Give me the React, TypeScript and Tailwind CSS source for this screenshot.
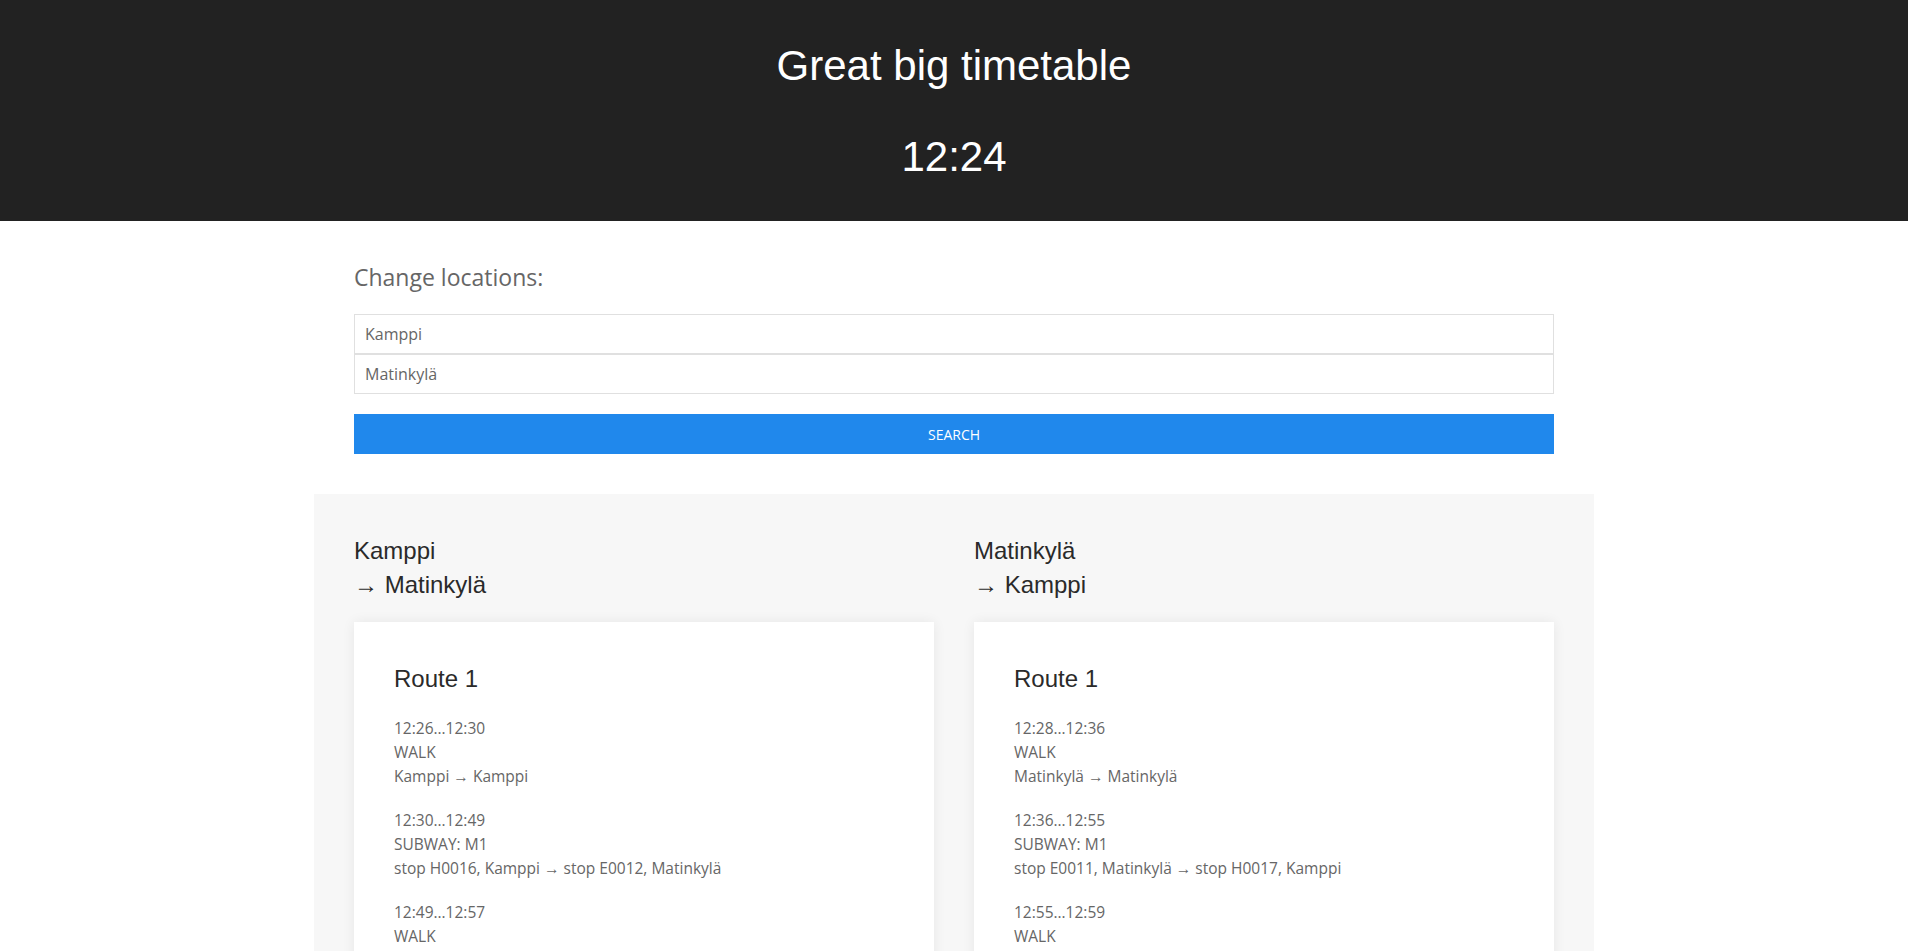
const trips = [
  {
    from: 'Kamppi',
    to: 'Matinkylä',
    routes: [
      {
        name: 'Route 1',
        legs: [
          { time: '12:26…12:30', mode: 'WALK', path: 'Kamppi → Kamppi' },
          { time: '12:30…12:49', mode: 'SUBWAY: M1', path: 'stop H0016, Kamppi → stop E0012, Matinkylä' },
          { time: '12:49…12:57', mode: 'WALK', path: 'stop E0012, Matinkylä → Matinkylä' },
        ],
      },
    ],
  },
  {
    from: 'Matinkylä',
    to: 'Kamppi',
    routes: [
      {
        name: 'Route 1',
        legs: [
          { time: '12:28…12:36', mode: 'WALK', path: 'Matinkylä → Matinkylä' },
          { time: '12:36…12:55', mode: 'SUBWAY: M1', path: 'stop E0011, Matinkylä → stop H0017, Kamppi' },
          { time: '12:55…12:59', mode: 'WALK', path: 'stop H0017, Kamppi → Kamppi' },
        ],
      },
    ],
  },
]

export default function App() {
  return (
    <div className="min-h-screen bg-white font-['Open_Sans',sans-serif]">
      {/* header */}
      <header className="bg-[#222222] pt-[42px] pb-[40px] text-center text-white font-['Liberation_Sans',Arial,sans-serif]">
        <h1 className="text-[42px] leading-[48px] mb-[43px]">Great big timetable</h1>
        <div className="text-[42px] leading-[48px]">12:24</div>
      </header>

      {/* search form */}
      <section className="w-[1200px] mx-auto pt-10">
        <h2 className="text-[23px] leading-8 text-[#666666] mb-[21px]">Change locations:</h2>
        <div className="flex flex-col">
          <input
            defaultValue="Kamppi"
            className="h-10 border border-[#e0e0e0] px-[10px] text-[16px] text-[#666666] outline-none"
          />
          <input
            defaultValue="Matinkylä"
            className="h-10 border border-[#e0e0e0] px-[10px] text-[16px] text-[#666666] outline-none"
          />
        </div>
        <button className="mt-5 w-full h-10 bg-[#2088ec] text-white text-[14px] uppercase">
          Search
        </button>
      </section>

      {/* results */}
      <section className="w-[1280px] mx-auto mt-10 bg-[#f7f7f7] px-10 pt-10 pb-10">
        <div className="grid grid-cols-2 gap-10">
          {trips.map((t) => (
            <div key={t.from}>
              <h3 className="font-['Liberation_Sans',Arial,sans-serif] text-[24px] leading-[34px] text-[#2a2a2a] mb-5">
                {t.from}
                <br />→ {t.to}
              </h3>
              {t.routes.map((r) => (
                <div key={r.name} className="bg-white p-10 shadow-[0_0_12px_rgba(0,0,0,0.07)]">
                  <h4 className="font-['Liberation_Sans',Arial,sans-serif] text-[24px] leading-[34px] text-[#2a2a2a] mb-5">
                    {r.name}
                  </h4>
                  <div className="flex flex-col gap-5">
                    {r.legs.map((l) => (
                      <div key={l.time} className="text-[15.5px] leading-6 text-[#666666]">
                        <div>{l.time}</div>
                        <div>{l.mode}</div>
                        <div>{l.path}</div>
                      </div>
                    ))}
                  </div>
                </div>
              ))}
            </div>
          ))}
        </div>
      </section>
    </div>
  )
}
